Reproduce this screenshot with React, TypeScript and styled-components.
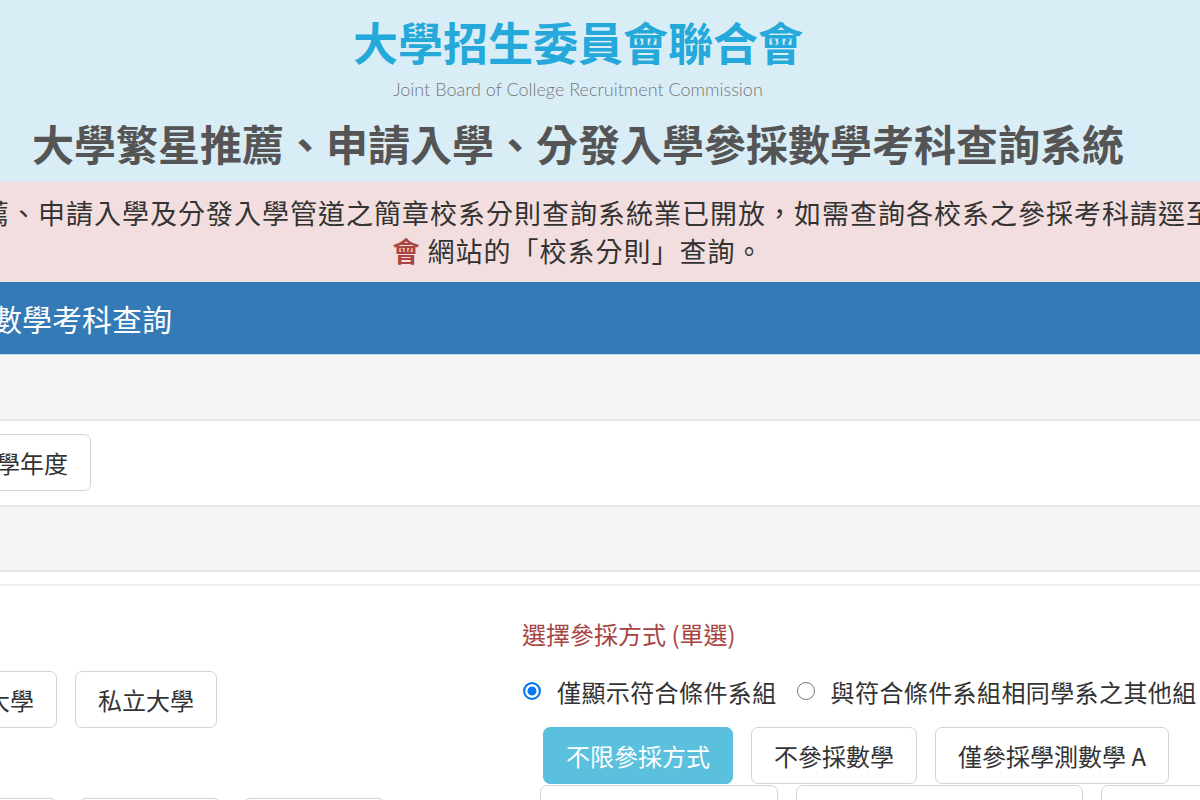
import styled, { createGlobalStyle } from "styled-components";

const GlobalStyle = createGlobalStyle`
  html, body {
    margin: 0;
    padding: 0;
    background: #ffffff;
  }
  body {
    font-family: "Noto Sans CJK TC", "Noto Sans", sans-serif;
    color: #333333;
  }
`;

function App() {
  return (
    <Viewport>
      <GlobalStyle />
      <Page>
        <Header>
          <OrgTitle>大學招生委員會聯合會</OrgTitle>
          <OrgSubtitle>Joint Board of College Recruitment Commission</OrgSubtitle>
          <SystemTitle>大學繁星推薦、申請入學、分發入學參採數學考科查詢系統</SystemTitle>
        </Header>

        <Notice>
          <NoticeLine $shift={12}>
            大學繁星推薦、申請入學及分發入學管道之簡章校系分則查詢系統業已開放，如需查詢各校系之參採考科請逕至
            <Agency>大學甄選</Agency>
          </NoticeLine>
          <NoticeLine>
            <Agency>會</Agency> 網站的「校系分則」查詢。
          </NoticeLine>
        </Notice>

        <Panel>
          <PanelHeading>參採數學考科查詢</PanelHeading>
          <ShadeRow $height={64} />
          <YearRow>
            <Btn>114學年度</Btn>
          </YearRow>
          <ShadeRow $height={63} />
          <Spacer />

          <Content>
            <LeftCol>
              <BtnRow $gap={18}>
                <Btn>公立大學</Btn>
                <Btn>私立大學</Btn>
              </BtnRow>
              <BtnRow $gap={22} $top={70}>
                <Btn>國立大學</Btn>
                <Btn>師範大學</Btn>
                <Btn>科技大學</Btn>
              </BtnRow>
            </LeftCol>

            <RightCol>
              <FieldLabel>選擇參採方式 (單選)</FieldLabel>
              <RadioGroup>
                <RadioOption>
                  <Radio type="radio" name="scope" defaultChecked />
                  僅顯示符合條件系組
                </RadioOption>
                <RadioOption>
                  <Radio type="radio" name="scope" />
                  與符合條件系組相同學系之其他組
                </RadioOption>
              </RadioGroup>
              <BtnRow $gap={18} $top={21} $indent={21}>
                <Btn $active>不限參採方式</Btn>
                <Btn>不參採數學</Btn>
                <Btn>僅參採學測數學 A</Btn>
              </BtnRow>
              <BtnRow $gap={18} $top={1} $indent={18}>
                <Btn>僅參採分科數學甲</Btn>
                <Btn>學測數學 A 或分科數甲</Btn>
                <Btn>學測數學 B 或分科數甲</Btn>
              </BtnRow>
            </RightCol>
          </Content>
        </Panel>
      </Page>
    </Viewport>
  );
}

export default App;

const Viewport = styled.div`
  width: 1200px;
  height: 800px;
  overflow: hidden;
`;

const Page = styled.div`
  width: 1600px;
  margin-left: -222px;
`;

const Header = styled.header`
  background: #d9edf7;
  text-align: center;
  padding: 15px 0 14px;
`;

const OrgTitle = styled.h1`
  margin: 0;
  font-size: 45px;
  line-height: 54px;
  font-weight: 700;
  color: #24a9da;
`;

const OrgSubtitle = styled.div`
  margin-top: 10px;
  font-family: Lato, "Open Sans", sans-serif;
  font-weight: 300;
  font-size: 18px;
  line-height: 20px;
  color: #777777;
`;

const SystemTitle = styled.h2`
  margin: 19px 0 0;
  font-size: 42px;
  line-height: 50px;
  font-weight: 700;
  color: #555555;
`;

const Notice = styled.div`
  background: #f2dede;
  padding: 12px 0;
  text-align: center;
  font-size: 27px;
  line-height: 38px;
  letter-spacing: 1px;
  color: #333333;
`;

const NoticeLine = styled.div<{ $shift?: number }>`
  white-space: nowrap;
  padding-left: ${(p) => p.$shift ?? 0}px;
`;

const Agency = styled.strong`
  color: #a94442;
  font-weight: 700;
`;

const Panel = styled.section`
  margin: 0 134px;
  border: 1px solid #337ab7;
  border-top: none;
  background: #ffffff;
`;

const PanelHeading = styled.div`
  height: 72px;
  padding: 0 19px;
  background: #337ab7;
  border-bottom: 1px solid #bcd5ea;
  color: #ffffff;
  font-size: 30px;
  line-height: 72px;
  white-space: nowrap;
`;

const ShadeRow = styled.div<{ $height: number }>`
  height: ${(p) => p.$height}px;
  background: #f5f5f5;
  border-bottom: 2px solid #e6e6e6;
`;

const YearRow = styled.div`
  padding: 13px 20px 14px;
  border-bottom: 2px solid #e6e6e6;
  display: flex;
`;

const Spacer = styled.div`
  height: 12px;
  border-bottom: 2px solid #eeeeee;
`;

const Content = styled.div`
  display: grid;
  grid-template-columns: 607px 1fr;
  padding-left: 2px;
  padding-bottom: 40px;
`;

const LeftCol = styled.div`
  padding-top: 85px;
`;

const RightCol = styled.div`
  padding-top: 33px;
  min-width: 0;
`;

const FieldLabel = styled.div`
  font-size: 24px;
  line-height: 30px;
  color: #a94442;
`;

const RadioGroup = styled.div`
  margin-top: 27px;
  height: 30px;
  display: flex;
  align-items: center;
  gap: 19px;
  white-space: nowrap;
`;

const RadioOption = styled.label`
  display: inline-flex;
  align-items: center;
  gap: 16px;
  font-size: 24px;
  letter-spacing: 0.4px;
  color: #333333;
`;

const Radio = styled.input`
  appearance: none;
  flex: none;
  box-sizing: border-box;
  width: 18px;
  height: 18px;
  margin: 0 0 0 1px;
  border-radius: 50%;
  border: 1.5px solid #767676;
  background: #ffffff;

  &:checked {
    border: 2px solid #0b76ef;
    background: #0b76ef;
    box-shadow: inset 0 0 0 2.5px #ffffff;
  }
`;

const BtnRow = styled.div<{ $gap: number; $top?: number; $indent?: number }>`
  display: flex;
  gap: ${(p) => p.$gap}px;
  margin-top: ${(p) => p.$top ?? 0}px;
  padding-left: ${(p) => p.$indent ?? 0}px;
  white-space: nowrap;
`;

const Btn = styled.button<{ $active?: boolean }>`
  flex: none;
  font-family: "Noto Sans CJK TC", "Noto Sans", sans-serif;
  font-size: 24px;
  line-height: 33px;
  padding: 11px 22px;
  border-radius: 7px;
  border: 1px solid ${(p) => (p.$active ? "#5bc0de" : "#d4d4d4")};
  background: ${(p) => (p.$active ? "#5bc0de" : "#ffffff")};
  color: ${(p) => (p.$active ? "#ffffff" : "#333333")};
  cursor: pointer;
`;
